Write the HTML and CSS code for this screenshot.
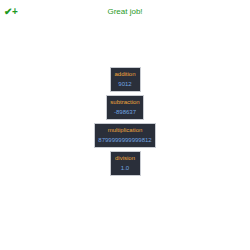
FILE: index.html
```html
<!DOCTYPE html>
<html lang="en">
<head>
  <meta charset="UTF-8"/>
  <title>Calculator results</title>
  <link rel="stylesheet" href="styles.css">
</head>
<body>
  <header class="top">
    <span class="marks">&#10004;+</span>
    <span class="msg">Great job!</span>
  </header>
  <div class="results">
    <div class="card"><div class="op">addition</div><div class="val">9012</div></div>
    <div class="card"><div class="op">subtraction</div><div class="val">-898637</div></div>
    <div class="card"><div class="op">multiplication</div><div class="val">8799999999999812</div></div>
    <div class="card"><div class="op">division</div><div class="val">1.0</div></div>
  </div>
</body>
</html>
```

FILE: styles.css
```css
*{margin:0;padding:0;box-sizing:border-box;}
body{font-family:'Liberation Sans',Arial,sans-serif;background:#fff;padding:6px 4px;}
.top{position:relative;height:12px;color:#1f9a1f;}
.marks{position:absolute;left:0;top:0;font-size:10px;font-weight:bold;}
.msg{display:block;text-align:center;font-size:8px;line-height:12px;}
.results{display:flex;flex-direction:column;align-items:center;gap:3px;margin-top:49px;}
.card{background:#2a2f3a;border:1px solid #c9ccd2;padding:1px 3px 2px;text-align:center;min-width:31px;}
.op{color:#f0a53a;font-size:6px;line-height:10px;}
.val{color:#72a4e0;font-size:6px;line-height:10px;}
```
